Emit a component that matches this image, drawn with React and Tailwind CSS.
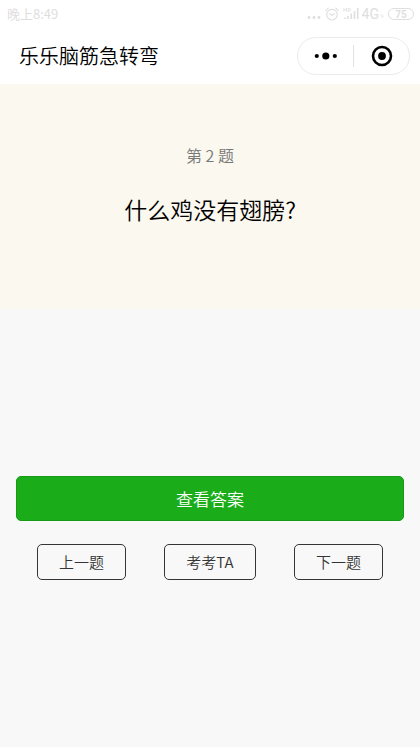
import { useState } from "react";

const riddles = [
  { id: 1, question: "什么瓜不能吃?", answer: "傻瓜" },
  { id: 2, question: "什么鸡没有翅膀?", answer: "田鸡" },
  { id: 3, question: "什么门永远关不上?", answer: "球门" },
];

// ─── Icons ───────────────────────────────────────────────────────────────────

function AlarmIcon() {
  return (
    <svg width="14" height="14" viewBox="0 0 14 14" fill="none" stroke="currentColor" strokeWidth="1.1" strokeLinecap="round" aria-hidden="true">
      <circle cx="7" cy="7.7" r="5.3" />
      <path d="M4.6 6.6L7 8.6L9.4 6.6" />
      <path d="M0.8 3.6L3.2 1.2M13.2 3.6L10.8 1.2" />
    </svg>
  );
}

function SignalIcon() {
  return (
    <svg width="16" height="14" viewBox="0 0 16 14" fill="none" stroke="currentColor" aria-hidden="true">
      <path d="M0.9 1V4.6M3.5 1V4.6M0.9 2.8H3.5M5 1.3V4.3H6Q7.6 4.1 7.6 2.8Q7.6 1.5 6 1.3Z" strokeWidth="0.8" />
      <path d="M2 10.5V12M5 9V12M8.3 6.5V12M11.5 4V12M14.7 1V12" strokeWidth="1.6" />
    </svg>
  );
}

function DataIcon() {
  return (
    <svg width="4" height="4" viewBox="0 0 5 5" fill="none" stroke="currentColor" strokeWidth="0.7" aria-hidden="true">
      <path d="M1.5 4.5V0.8L0.4 2M3.5 0.5V4.2L4.6 3" />
    </svg>
  );
}

function MoreIcon() {
  return (
    <svg width="24" height="10" viewBox="0 0 24 10" fill="currentColor" aria-hidden="true">
      <circle cx="2.8" cy="5" r="2.1" />
      <circle cx="11.8" cy="5" r="3.6" />
      <circle cx="20.8" cy="5" r="2.1" />
    </svg>
  );
}

function TargetIcon() {
  return (
    <svg width="22" height="22" viewBox="0 0 22 22" aria-hidden="true">
      <circle cx="11" cy="11" r="9" fill="none" stroke="currentColor" strokeWidth="2.6" />
      <circle cx="11" cy="11" r="3.9" fill="currentColor" />
    </svg>
  );
}

// ─── Page parts ──────────────────────────────────────────────────────────────

function StatusBar() {
  return (
    <div className="flex h-7 items-center justify-between pl-[7px] pr-1.5 font-normal text-[#dedede]">
      <span className="text-[13px] leading-5">晚上8:49</span>
      <div className="flex items-center gap-1">
        <svg width="14" height="14" viewBox="0 0 14 14" fill="currentColor" aria-hidden="true">
          <circle cx="2" cy="10.5" r="1.4" />
          <circle cx="7" cy="10.5" r="1.4" />
          <circle cx="12" cy="10.5" r="1.4" />
        </svg>
        <AlarmIcon />
        <div className="flex items-center">
          <SignalIcon />
          <span className="pl-[3px] font-['Roboto',sans-serif] text-sm leading-5">4G</span>
          <span className="pl-px pt-1"><DataIcon /></span>
        </div>
        <span className="flex h-3 w-[26px] items-center justify-center rounded-full border border-current font-['Roboto',sans-serif] text-[10px] font-bold">
          75
        </span>
      </div>
    </div>
  );
}

function Header() {
  return (
    <div className="flex h-14 items-center justify-between pl-[19px] pr-2.5">
      <h1 className="text-xl text-black">乐乐脑筋急转弯</h1>
      <div className="flex h-[38px] w-[113px] items-center rounded-full border border-[#ebebeb] text-black">
        <button type="button" aria-label="更多" className="flex h-full flex-1 items-center justify-center">
          <MoreIcon />
        </button>
        <span className="h-[22px] w-px bg-[#e2e2e2]" />
        <button type="button" aria-label="关闭" className="flex h-full flex-1 items-center justify-center">
          <TargetIcon />
        </button>
      </div>
    </div>
  );
}

function OutlineButton({ children, onClick }) {
  return (
    <button
      type="button"
      onClick={onClick}
      className="h-9 rounded-[5px] border border-[#353535] px-[21px] text-[15px] text-[#353535]"
    >
      {children}
    </button>
  );
}

function App() {
  const [index, setIndex] = useState(1);
  const [showAnswer, setShowAnswer] = useState(false);
  const riddle = riddles[index];

  const move = (step) => {
    setIndex((i) => (i + step + riddles.length) % riddles.length);
    setShowAnswer(false);
  };

  return (
    <div className="flex min-h-screen flex-col bg-[#f8f8f8] font-['Noto_Sans_CJK_SC',sans-serif] font-[350]">
      <header className="bg-white">
        <StatusBar />
        <Header />
      </header>

      <section className="bg-[#fbf8ef] px-4 pb-20 pt-[59px] text-center">
        <p className="text-base leading-6 text-[#777777]">第 {riddle.id} 题</p>
        <h2 className="mt-[22px] text-[23px] leading-10 text-black">{riddle.question}</h2>
      </section>

      <main className="flex flex-1 flex-col pb-[167px]">
        <div className="flex flex-1 items-center justify-center text-xl text-[#353535]">
          {showAnswer && <p>{riddle.answer}</p>}
        </div>
        <div className="px-4">
          <button
            type="button"
            onClick={() => setShowAnswer(true)}
            className="h-[45px] w-full rounded-[5px] border border-[#179b16] bg-[#1aad19] text-[17px] text-white"
          >
            查看答案
          </button>
        </div>
        <div className="mt-[23px] flex justify-between px-[37px]">
          <OutlineButton onClick={() => move(-1)}>上一题</OutlineButton>
          <OutlineButton>考考TA</OutlineButton>
          <OutlineButton onClick={() => move(1)}>下一题</OutlineButton>
        </div>
      </main>
    </div>
  );
}

export default App;
